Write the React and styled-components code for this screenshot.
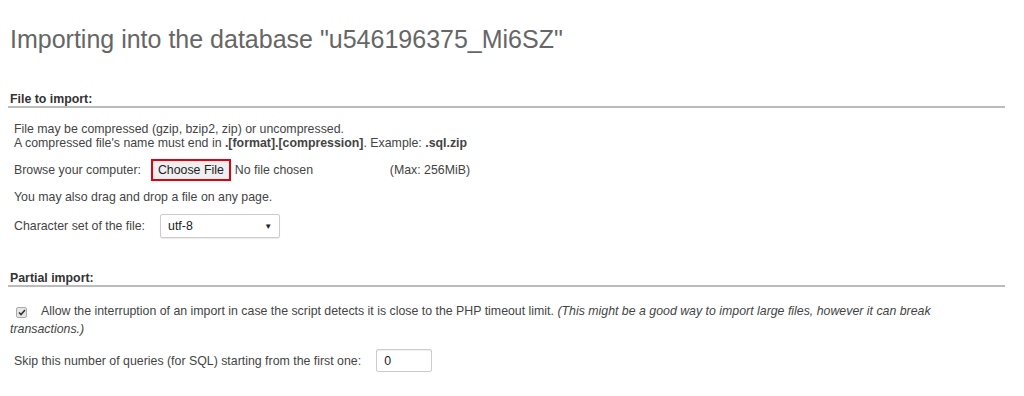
import React from "react";
import styled, { createGlobalStyle } from "styled-components";

const GlobalStyle = createGlobalStyle`
  body {
    margin: 0;
    background: #fff;
    font-family: "Liberation Sans", Arial, sans-serif;
    font-size: 12.35px;
    color: #444;
  }
`;

const Page = styled.div`
  padding: 0 19px 0 8px;
`;

const Title = styled.h2`
  margin: 0;
  padding: 24px 0 0 2px;
  font-size: 25px;
  font-weight: normal;
  color: #666;
  line-height: 30px;
`;

const Section = styled.div`
  margin-top: ${(p) => p.$top}px;
`;

const Legend = styled.div`
  font-weight: bold;
  color: #333;
  padding: 0 0 0 2px;
  border-bottom: 2px solid #bbb;
  line-height: 14px;
`;

const Block = styled.div`
  padding-left: 6px;
  margin-top: ${(p) => p.$top}px;
  line-height: 14px;
`;

const Row = styled.div`
  display: flex;
  align-items: center;
  padding-left: 6px;
  margin-top: ${(p) => p.$top}px;
`;

const FileButton = styled.button`
  font-family: "Liberation Sans", Arial, sans-serif;
  font-size: 12.35px;
  color: #222;
  background: #efefef;
  border: 2px solid #e0000f;
  padding: 2px 5px;
  height: 22px;
  margin-left: 10px;
`;

const NoFile = styled.span`
  margin-left: 4px;
  width: 155px;
`;

const Select = styled.div`
  display: flex;
  align-items: center;
  justify-content: space-between;
  box-sizing: border-box;
  width: 120px;
  height: 24px;
  padding: 0 7px;
  margin-left: 15px;
  border: 1px solid #ccc;
  border-radius: 2px;
  color: #222;
  box-shadow: 0 1px 1px rgba(0, 0, 0, 0.08);
`;

const Arrow = styled.span`
  font-size: 8px;
  color: #222;
`;

const CheckRow = styled.div`
  padding-left: 2px;
  margin-top: ${(p) => p.$top}px;
  line-height: 18px;
`;

const Check = styled.span`
  display: inline-flex;
  align-items: center;
  justify-content: center;
  box-sizing: border-box;
  width: 11px;
  height: 11px;
  margin: 0 14px 0 6px;
  border: 1px solid #aaa;
  border-radius: 2px;
  background: #e6e6e6;
  vertical-align: -1px;
`;

const Note = styled.i`
  color: #444;
`;

const NumInput = styled.div`
  box-sizing: border-box;
  width: 56px;
  height: 23px;
  margin-left: 15px;
  padding-left: 7px;
  border: 1px solid #ccc;
  border-radius: 2px;
  color: #222;
  display: flex;
  align-items: center;
  box-shadow: inset 0 1px 1px rgba(0, 0, 0, 0.06);
`;

const App = () => (
  <Page>
    <GlobalStyle />
    <Title>Importing into the database "u546196375_Mi6SZ"</Title>
    <Section $top={38}>
      <Legend>File to import:</Legend>
      <Block $top={14}>
        File may be compressed (gzip, bzip2, zip) or uncompressed.
        <br />
        A compressed file's name must end in <b>.[format].[compression]</b>.
        Example: <b>.sql.zip</b>
      </Block>
      <Row $top={9}>
        Browse your computer:
        <FileButton>Choose File</FileButton>
        <NoFile>No file chosen</NoFile>
        (Max: 256MiB)
      </Row>
      <Block $top={9}>You may also drag and drop a file on any page.</Block>
      <Row $top={10}>
        Character set of the file:
        <Select>
          utf-8
          <Arrow>▼</Arrow>
        </Select>
      </Row>
    </Section>
    <Section $top={33}>
      <Legend>Partial import:</Legend>
      <CheckRow $top={15}>
        <Check>
          <svg width="8" height="7" viewBox="0 0 8 7">
            <path d="M1 3.5 L3 5.5 L7 1" fill="none" stroke="#333" strokeWidth="1.6" />
          </svg>
        </Check>
        <span>
          Allow the interruption of an import in case the script detects it is
          close to the PHP timeout limit.
        </span>{" "}
        <Note>
          (This might be a good way to import large files, however it can break
        </Note>
        <br />
        <Note>transactions.)</Note>
      </CheckRow>
      <Row $top={11}>
        Skip this number of queries (for SQL) starting from the first one:
        <NumInput>0</NumInput>
      </Row>
    </Section>
  </Page>
);

export default App;
